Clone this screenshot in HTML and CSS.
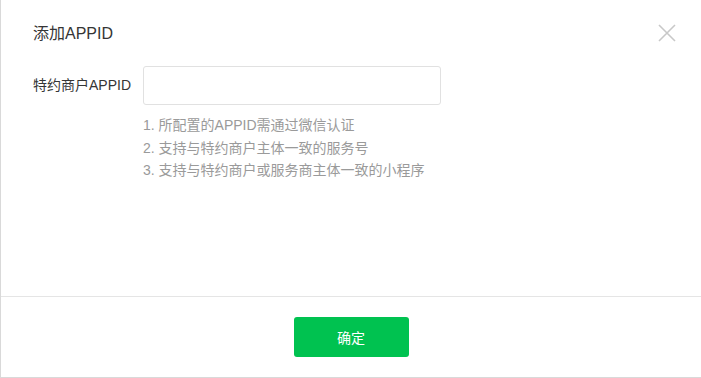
FILE: index.html
```html
<!DOCTYPE html>
<html lang="zh-CN">
<head>
  <meta charset="UTF-8">
  <meta name="viewport" content="width=device-width, initial-scale=1.0">
  <title>添加APPID</title>
  <link rel="stylesheet" href="styles.css">
</head>
<body>
  <div class="dialog">
    <div class="dialog-hd">
      <h3 class="dialog-title">添加APPID</h3>
      <button class="dialog-close" aria-label="关闭">
        <svg width="18" height="18" viewBox="0 0 18 18">
          <path d="M1 1 L17 17 M17 1 L1 17" stroke="#c8c8c8" stroke-width="1.6" fill="none"/>
        </svg>
      </button>
    </div>
    <div class="dialog-bd">
      <div class="form-row">
        <label class="form-label" for="appid">特约商户APPID</label>
        <input class="form-input" id="appid" type="text">
      </div>
      <ul class="form-tips">
        <li>1. 所配置的APPID需通过微信认证</li>
        <li>2. 支持与特约商户主体一致的服务号</li>
        <li>3. 支持与特约商户或服务商主体一致的小程序</li>
      </ul>
    </div>
    <div class="dialog-ft">
      <button class="btn-primary">确定</button>
    </div>
  </div>
</body>
</html>
```

FILE: styles.css
```css
* {
  margin: 0;
  padding: 0;
  box-sizing: border-box;
}

body {
  font-family: 'Liberation Sans', 'Noto Sans CJK SC', sans-serif;
  background-color: #fff;
  color: #353535;
}

.dialog {
  position: relative;
  width: 701px;
  height: 378px;
  border-left: 1px solid #d9d9d9;
  border-bottom: 1px solid #d9d9d9;
  display: flex;
  flex-direction: column;
}

.dialog-hd {
  padding: 23px 32px 0;
}

.dialog-title {
  font-size: 16px;
  font-weight: normal;
  line-height: 22px;
}

.dialog-close {
  position: absolute;
  top: 24px;
  right: 25px;
  width: 18px;
  height: 18px;
  border: none;
  background: none;
  cursor: pointer;
}

.dialog-close svg {
  display: block;
}

.dialog-bd {
  flex: 1;
  padding: 21px 32px 0;
}

.form-row {
  display: flex;
  align-items: center;
}

.form-label {
  width: 110px;
  font-size: 14px;
  line-height: 39px;
}

.form-input {
  width: 298px;
  height: 39px;
  border: 1px solid #e1e1e1;
  border-radius: 3px;
  padding: 0 10px;
  font-size: 14px;
  outline: none;
}

.form-tips {
  list-style: none;
  margin: 9px 0 0 110px;
  font-size: 14px;
  line-height: 22.5px;
  color: #9a9a9a;
}

.dialog-ft {
  border-top: 1px solid #e5e5e5;
  padding: 20px 0;
  display: flex;
  justify-content: center;
}

.btn-primary {
  width: 115px;
  height: 40px;
  border: none;
  border-radius: 3px;
  background-color: #00c250;
  color: #fff;
  font-family: inherit;
  font-size: 14px;
  cursor: pointer;
}
```
